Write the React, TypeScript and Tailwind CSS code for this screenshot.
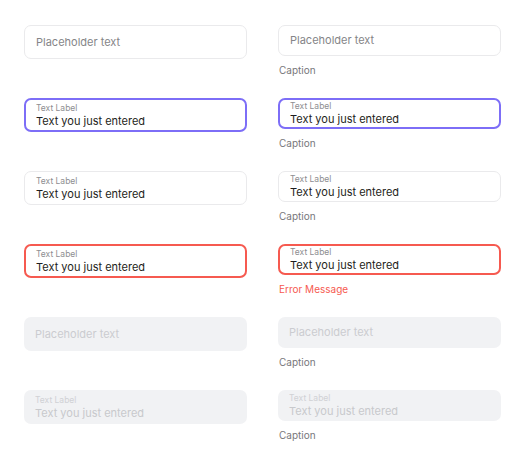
const font = { fontFamily: 'Inter, "Noto Sans", sans-serif' };

type Variant = 'empty' | 'focus' | 'filled' | 'error' | 'disabled' | 'disabledFilled';

function Field({ variant, tall }: { variant: Variant; tall: boolean }) {
    const h = tall ? 'h-[34px]' : 'h-[31px]';
    let box = 'border border-[#eaeaec] bg-white';
    if (variant === 'focus') box = 'border-2 border-[#7d6ef7] bg-white';
    if (variant === 'error') box = 'border-2 border-[#f65a50] bg-white';
    if (variant === 'disabled' || variant === 'disabledFilled') box = 'bg-[#f1f2f4]';

    const pad = variant === 'focus' || variant === 'error' ? 'pl-[10px]' : 'pl-[11px]';

    if (variant === 'empty' || variant === 'disabled') {
        return (
            <div className={`${h} ${box} ${pad} rounded-[7px] flex items-center`}>
                <span
                    className={`text-[11px] ${variant === 'disabled' ? 'text-[#cbccd0]' : 'text-[#858588]'}`}
                >
                    Placeholder text
                </span>
            </div>
        );
    }

    const muted = variant === 'disabledFilled';
    return (
        <div className={`${h} ${box} ${pad} rounded-[7px] flex flex-col justify-center`}>
            <span className={`text-[8.5px] leading-[11px] ${muted ? 'text-[#d0d1d4]' : 'text-[#8e8e91]'}`}>
                Text Label
            </span>
            <span className={`text-[11px] leading-[14px] ${muted ? 'text-[#c8c9cc]' : 'text-[#1e1e20]'}`}>
                Text you just entered
            </span>
        </div>
    );
}

const rows: Variant[] = ['empty', 'focus', 'filled', 'error', 'disabled', 'disabledFilled'];

export default function App() {
    return (
        <div className="w-[527px] h-[457px] bg-white pt-[25px] pl-[24px]" style={font}>
            <div className="grid grid-cols-[223px_223px] gap-x-[31px]">
                <div className="flex flex-col">
                    {rows.map((v) => (
                        <div key={v} className="h-[73px]">
                            <Field variant={v} tall />
                        </div>
                    ))}
                </div>
                <div className="flex flex-col">
                    {rows.map((v) => (
                        <div key={v} className="h-[73px]">
                            <Field variant={v} tall={false} />
                            <p
                                className={`mt-[8px] ml-[1px] text-[10px] leading-[13px] ${
                                    v === 'error' ? 'text-[#f65a50]' : 'text-[#77777a]'
                                }`}
                            >
                                {v === 'error' ? 'Error Message' : 'Caption'}
                            </p>
                        </div>
                    ))}
                </div>
            </div>
        </div>
    );
}
